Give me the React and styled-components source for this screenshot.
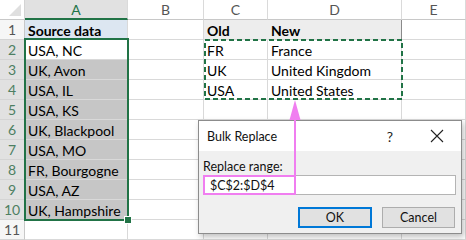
import React from 'react'
import styled, { createGlobalStyle } from 'styled-components'

const GlobalStyle = createGlobalStyle`
  html, body {
    margin: 0;
    padding: 0;
    background: #ffffff;
  }
  body {
    width: 466px;
    height: 240px;
    overflow: hidden;
    font-family: Lato, "Liberation Sans", sans-serif;
  }
`

const GREEN = '#217346'
const PINK = '#f07ef0'

const columns = [
  { name: 'A', selected: true },
  { name: 'B' },
  { name: 'C' },
  { name: 'D' },
  { name: 'E' }
]

const rows = [
  ['Source data', '', 'Old', 'New', ''],
  ['USA, NC', '', 'FR', 'France', ''],
  ['UK, Avon', '', 'UK', 'United Kingdom', ''],
  ['USA, IL', '', 'USA', 'United States', ''],
  ['USA, KS', '', '', '', ''],
  ['UK, Blackpool', '', '', '', ''],
  ['USA, MO', '', '', '', ''],
  ['FR, Bourgogne', '', '', '', ''],
  ['USA, AZ', '', '', '', ''],
  ['UK, Hampshire', '', '', '', ''],
  ['', '', '', '', '']
]

// fill colour of a cell, by row and column index
const cellFill = (r, c) => {
  if (r === 0 && c === 0) return '#dce6f1'
  if (r === 0 && (c === 2 || c === 3)) return '#ededed'
  if (c === 0 && r >= 2 && r <= 9) return '#c6c6c6'
  return '#ffffff'
}

export default function App() {
  return (
    <>
      <GlobalStyle/>
      <Sheet>
        <Corner>
          <CornerMark/>
        </Corner>
        {columns.map(col => (
          <ColHeader key={col.name} $selected={col.selected}>{col.name}</ColHeader>
        ))}
        {rows.map((row, r) => (
          <React.Fragment key={r}>
            <RowHeader $selected={r >= 1 && r <= 9}>{r + 1}</RowHeader>
            {row.map((text, c) => (
              <Cell
                key={c}
                $fill={cellFill(r, c)}
                $bold={r === 0}
                $edge={r === 0 && c === 3}
                $noRight={r === 0 && c === 2}
              >
                {text}
              </Cell>
            ))}
          </React.Fragment>
        ))}

        <SelectionBox>
          <FillHandle/>
        </SelectionBox>

        <CopyMarquee width="199" height="61" viewBox="0 0 199 61">
          <rect x="1" y="1" width="197" height="59" fill="none" stroke={GREEN} strokeWidth="2" strokeDasharray="5 3"/>
        </CopyMarquee>

        <Pointer width="14" height="76" viewBox="0 0 14 76">
          <polygon points="7,0 1.5,20 12.5,20" fill={PINK}/>
          <rect x="6" y="14" width="2" height="62" fill={PINK}/>
        </Pointer>

        <Dialog>
          <TitleBar>
            <Title>Bulk Replace</Title>
            <TitleButtons>
              <HelpMark>?</HelpMark>
              <CloseIcon width="14" height="14" viewBox="0 0 14 14">
                <path d="M1 1 L13 13 M13 1 L1 13" stroke="#222" strokeWidth="1.1" fill="none"/>
              </CloseIcon>
            </TitleButtons>
          </TitleBar>
          <DialogBody>
            <Label>Replace range:</Label>
            <RangeInput>
              <RangeValue>$C$2:$D$4</RangeValue>
            </RangeInput>
            <ButtonRow>
              <Button $default>OK</Button>
              <Button>Cancel</Button>
            </ButtonRow>
          </DialogBody>
        </Dialog>
      </Sheet>
    </>
  )
}

const Sheet = styled.div`
  position: relative;
  display: grid;
  grid-template-columns: 25px 103px 76px 64px 134px 64px;
  grid-template-rows: repeat(12, 20px);
  width: 466px;
  height: 240px;
  font-size: 14px;
  color: #000;
`

const Corner = styled.div`
  position: relative;
  box-sizing: border-box;
  background: #ffffff;
  border-right: 1px solid #d4d4d4;
  border-bottom: 1px solid #c8c8c8;
`

const CornerMark = styled.div`
  position: absolute;
  right: 3px;
  bottom: 3px;
  width: 0;
  height: 0;
  border-left: 12px solid transparent;
  border-bottom: 12px solid #dfdfdf;
`

const ColHeader = styled.div`
  box-sizing: border-box;
  display: flex;
  align-items: center;
  justify-content: center;
  background: ${p => (p.$selected ? '#e1e1e1' : '#ffffff')};
  color: ${p => (p.$selected ? GREEN : '#555')};
  border-right: 1px solid #dadada;
  border-bottom: ${p => (p.$selected ? `2px solid ${GREEN}` : '1px solid #c8c8c8')};
  padding-top: ${p => (p.$selected ? '1px' : '0')};
  font-size: 14px;
`

const RowHeader = styled.div`
  box-sizing: border-box;
  display: flex;
  align-items: center;
  justify-content: center;
  background: ${p => (p.$selected ? '#e1e1e1' : '#f6f6f6')};
  color: ${p => (p.$selected ? '#4d7f62' : '#555')};
  border-right: 1px solid #c8c8c8;
  border-bottom: 1px solid #d4d4d4;
  font-size: 14px;
`

const Cell = styled.div`
  box-sizing: border-box;
  display: flex;
  align-items: center;
  padding: 1px 0 0 3px;
  background: ${p => p.$fill};
  border-right: 1px solid ${p => (p.$edge ? '#8a8a8a' : p.$noRight ? p.$fill : '#d9d9d9')};
  border-bottom: 1px solid #d9d9d9;
  font-weight: ${p => (p.$bold ? 700 : 400)};
  white-space: nowrap;
  overflow: hidden;
`

const SelectionBox = styled.div`
  position: absolute;
  left: 24px;
  top: 38px;
  width: 105px;
  height: 183px;
  box-sizing: border-box;
  border: 2px solid ${GREEN};
  pointer-events: none;
`

const FillHandle = styled.div`
  position: absolute;
  right: -5px;
  bottom: -5px;
  width: 6px;
  height: 6px;
  background: ${GREEN};
  border: 1px solid #ffffff;
`

const CopyMarquee = styled.svg`
  position: absolute;
  left: 204px;
  top: 39px;
`

const Pointer = styled.svg`
  position: absolute;
  left: 288px;
  top: 100px;
  z-index: 3;
`

const Dialog = styled.div`
  position: absolute;
  left: 198px;
  top: 120px;
  width: 264px;
  height: 114px;
  box-sizing: border-box;
  display: flex;
  flex-direction: column;
  background: #f0f0f0;
  border: 1px solid #8c8c8c;
  box-shadow: 2px 3px 6px rgba(0, 0, 0, 0.25);
  font-family: Lato, "Liberation Sans", sans-serif;
  font-size: 12.5px;
  color: #111;
  z-index: 2;
`

const TitleBar = styled.div`
  display: flex;
  align-items: center;
  justify-content: space-between;
  height: 30px;
  padding: 0 0 0 8px;
  background: #ffffff;
`

const Title = styled.span`
  font-size: 12.5px;
`

const TitleButtons = styled.div`
  display: flex;
  align-items: center;
`

const HelpMark = styled.span`
  width: 46px;
  text-align: center;
  font-size: 14px;
  color: #222;
`

const CloseIcon = styled.svg`
  margin: 0 17px 0 17px;
`

const DialogBody = styled.div`
  display: flex;
  flex-direction: column;
  padding: 7px 5px 0 4px;
`

const Label = styled.div`
  height: 17px;
  line-height: 17px;
`

const RangeInput = styled.div`
  display: flex;
  height: 20px;
  box-sizing: border-box;
  background: #ffffff;
  border: 1px solid #b4b4b4;
`

const RangeValue = styled.div`
  display: flex;
  align-items: center;
  width: 93px;
  margin: -1px;
  box-sizing: border-box;
  height: 20px;
  padding-left: 5px;
  border: 2px solid ${PINK};
`

const ButtonRow = styled.div`
  display: flex;
  justify-content: flex-end;
  gap: 10px;
  margin-top: 12px;
  padding-right: 1px;
`

const Button = styled.div`
  box-sizing: border-box;
  display: flex;
  align-items: center;
  justify-content: center;
  width: ${p => (p.$default ? '74px' : '73px')};
  height: 21px;
  background: #e1e1e1;
  border: ${p => (p.$default ? '2px solid #0078d7' : '1px solid #adadad')};
`
